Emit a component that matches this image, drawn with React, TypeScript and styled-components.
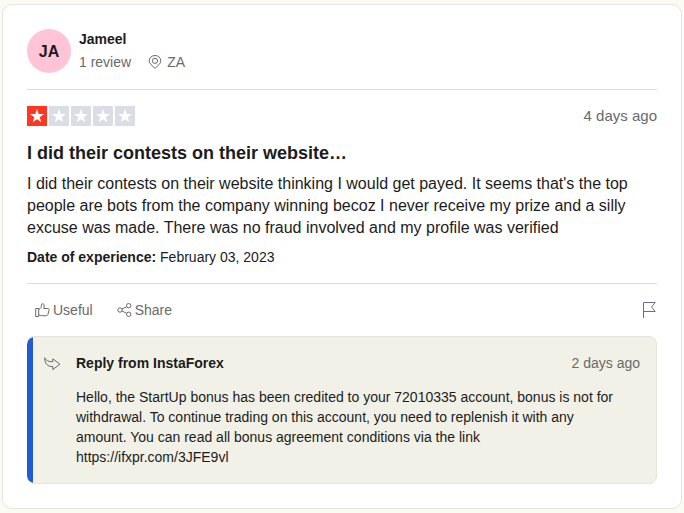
import React from "react";
import styled, { createGlobalStyle } from "styled-components";

const GlobalStyle = createGlobalStyle`
  * { box-sizing: border-box; }
  body {
    margin: 0;
    background: #fcfbf3;
    color: #1c1c1c;
    font-family: "Liberation Sans", Helvetica, Arial, sans-serif;
    font-size: 14px;
    line-height: 20px;
  }
  h2, h3, p { margin: 0; }
  svg { display: block; flex: none; }
`;

const Page = styled.main`
  padding: 4px 2px;
`;

const Card = styled.article`
  padding: 24px;
  background: #fff;
  border: 1px solid #e5e5dd;
  border-radius: 10px;
`;

const Header = styled.header`
  display: flex;
  align-items: center;
  gap: 8px;
  padding-bottom: 16px;
  border-bottom: 1px solid #dcdce0;
`;

const Avatar = styled.div`
  display: grid;
  place-items: center;
  width: 44px;
  height: 44px;
  padding-top: 2px;
  border-radius: 50%;
  background: #ffc4d5;
  font-size: 16px;
  font-weight: 700;
`;

const Author = styled.div`
  display: flex;
  flex-direction: column;
  gap: 3px;
  padding-bottom: 1px;
`;

const AuthorLink = styled.a`
  color: inherit;
  font-weight: 700;
  text-decoration: none;
`;

const AuthorDetails = styled.div`
  display: flex;
  gap: 17px;
  color: #696a6a;
`;

const Location = styled.span`
  display: flex;
  align-items: center;
  gap: 5px;
`;

const Row = styled.div<{ $top?: number }>`
  display: flex;
  align-items: center;
  justify-content: space-between;
  padding-top: ${({ $top = 0 }) => $top}px;
`;

const When = styled.time<{ $small?: boolean }>`
  color: #696a6a;
  font-size: ${({ $small }) => ($small ? 14 : 15)}px;
`;

const Stars = styled.div`
  display: flex;
  gap: 2px;
`;

const Title = styled.h2`
  margin-top: 15px;
  font-size: 18px;
  line-height: 24px;
`;

const Body = styled.p`
  margin-top: 8px;
  font-size: 16px;
  line-height: 22px;
`;

const Experience = styled.p`
  margin-top: 8px;
  padding-bottom: 16px;
  border-bottom: 1px solid #dcdce0;
`;

const Actions = styled.div`
  display: flex;
  gap: 8px;
`;

const ActionButton = styled.button`
  display: flex;
  align-items: center;
  gap: 3px;
  padding: 6px 8px;
  border: 0;
  background: none;
  color: #696a6a;
  font: inherit;
  cursor: pointer;
`;

const FlagButton = styled.button`
  padding: 0;
  border: 0;
  background: none;
  color: #6c6c85;
  cursor: pointer;
`;

const Reply = styled.section`
  display: flex;
  gap: 15px;
  margin-top: 10px;
  padding: 16px 16px 16px 17px;
  border: 1px solid #e5e5dd;
  border-left: 0;
  border-radius: 8px;
  background: linear-gradient(to right, #205cd4 6px, #f1f1e8 6px) border-box;
`;

const ReplyMark = styled.div`
  padding-top: 4px;
  color: #696a6a;
`;

const ReplyContent = styled.div`
  flex: 1;
`;

const ReplyTitle = styled.h3`
  font-size: 14px;
`;

const ReplyText = styled.p`
  margin-top: 14px;
  padding-right: 20px;
`;

const PinIcon = () => (
  <svg width="14" height="14" viewBox="0 0 14 14" fill="none" stroke="currentColor">
    <path d="M7 13.4 3 9.6A5.6 5.6 0 0 1 1.2 5.7a5.8 5.2 0 0 1 11.6 0A5.6 5.6 0 0 1 11 9.6Z" />
    <circle cx="7" cy="5.8" r="2.6" />
  </svg>
);

const ThumbIcon = () => (
  <svg width="15" height="14" viewBox="0 0 15 14" fill="none" stroke="currentColor">
    <path d="M.7 5.5h3v8h-3ZM3.7 6.5C6 5.5 6.5 4 6.5 1.5c0-1 2.8-1.3 2.8 1.3 0 1-.4 1.8-.7 2.7h4.2c1.2 0 1.5.8 1.3 1.6l-1.2 4.4c-.2.8-.7 1.2-1.4 1.2H6.8c-1.3 0-1.8-.8-3.1-.8" />
  </svg>
);

const ShareIcon = () => (
  <svg width="15" height="14" viewBox="0 0 15 14" fill="none" stroke="currentColor">
    <circle cx="3" cy="7" r="2.2" />
    <circle cx="11.7" cy="2.7" r="2.2" />
    <circle cx="11.7" cy="11.3" r="2.2" />
    <path d="m5 6 4.7-2.3M5 8l4.7 2.3" />
  </svg>
);

const FlagIcon = () => (
  <svg width="15" height="16" viewBox="0 0 15 16" fill="none" stroke="currentColor">
    <path d="M1.5 16V.5h11.7L9.5 5l3.7 4.5H1.5" />
  </svg>
);

const ReplyIcon = () => (
  <svg width="17" height="14" viewBox="0 0 17 14" fill="none" stroke="currentColor">
    <path d="M.8.8C1.8 3.5 4.5 5 8.8 4.7V1.9L15.9 7.2 8.8 12.6V9.6C3.8 9.7.4 6.5.8.8Z" />
  </svg>
);

const Star = ({ filled }: { filled: boolean }) => (
  <svg width="20" height="20" viewBox="0 0 20 20">
    <path fill={filled ? "#ff3722" : "#dcdce6"} d="M0 0h20v20H0z" />
    <path fill="#fff" d="m10 3 1.7 5.1H17l-4.3 3.1 1.6 5.1-4.3-3.1-4.3 3.1 1.6-5.1L3 8.1h5.3Z" />
  </svg>
);

export default function App() {
  return (
    <>
      <GlobalStyle />
      <Page>
        <Card>
          <Header>
            <Avatar>JA</Avatar>
            <Author>
              <AuthorLink href="#author">Jameel</AuthorLink>
              <AuthorDetails>
                <span>1 review</span>
                <Location>
                  <PinIcon />
                  ZA
                </Location>
              </AuthorDetails>
            </Author>
          </Header>
          <Row $top={16}>
            <Stars role="img" aria-label="Rated 1 out of 5 stars">
              {[1, 2, 3, 4, 5].map((n) => (
                <Star key={n} filled={n === 1} />
              ))}
            </Stars>
            <When>4 days ago</When>
          </Row>
          <Title>I did their contests on their website…</Title>
          <Body>
            I did their contests on their website thinking I would get payed. It seems that's the top
            people are bots from the company winning becoz I never receive my prize and a silly
            excuse was made. There was no fraud involved and my profile was verified
          </Body>
          <Experience>
            <strong>Date of experience:</strong> February 03, 2023
          </Experience>
          <Row $top={10}>
            <Actions>
              <ActionButton type="button">
                <ThumbIcon />
                Useful
              </ActionButton>
              <ActionButton type="button">
                <ShareIcon />
                Share
              </ActionButton>
            </Actions>
            <FlagButton type="button" aria-label="Report review">
              <FlagIcon />
            </FlagButton>
          </Row>
          <Reply>
            <ReplyMark>
              <ReplyIcon />
            </ReplyMark>
            <ReplyContent>
              <Row>
                <ReplyTitle>Reply from InstaForex</ReplyTitle>
                <When $small>2 days ago</When>
              </Row>
              <ReplyText>
                Hello, the StartUp bonus has been credited to your 72010335 account, bonus is not for
                withdrawal. To continue trading on this account, you need to replenish it with any
                amount. You can read all bonus agreement conditions via the link
                https://ifxpr.com/3JFE9vl
              </ReplyText>
            </ReplyContent>
          </Reply>
        </Card>
      </Page>
    </>
  );
}
